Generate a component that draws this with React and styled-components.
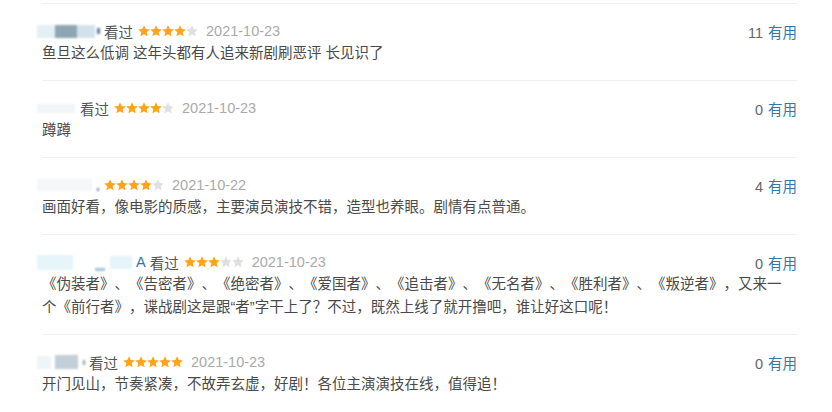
import { createGlobalStyle } from 'styled-components';
import styled from 'styled-components';

const GlobalStyle = createGlobalStyle`
  body {
    margin: 0;
    background: #fff;
    font-family: "Liberation Sans", "Noto Sans CJK SC", sans-serif;
    text-spacing-trim: space-all;
  }
`;

const List = styled.div`
  width: 755px;
  margin-left: 42px;
  padding-top: 3px;
`;

const Item = styled.div`
  border-top: 1px solid #f0f0f0;
  padding: 16px 0 15px;
`;

const Header = styled.div`
  display: flex;
  align-items: center;
  justify-content: space-between;
  height: 22px;
  font-size: 14.5px;
`;

const Info = styled.div`
  display: flex;
  align-items: center;
`;

const Mask = styled.div`
  display: flex;
  align-items: center;
  width: ${(p) => p.w}px;
  height: 18px;
  margin-left: -5px;
  filter: blur(1px);
`;

const Block = styled.span`
  display: block;
  flex: none;
  width: ${(p) => p.w}px;
  height: ${(p) => p.h || 13}px;
  margin-left: ${(p) => p.ml || 0}px;
  margin-top: ${(p) => p.mt || 0}px;
  background: ${(p) => p.c};
`;

const NameTail = styled.span`
  color: #3377aa;
  margin-left: 4px;
`;

const Seen = styled.span`
  color: #555;
  margin-left: 4px;
`;

const StarRow = styled.span`
  display: flex;
  margin-left: 5px;
`;

const Date = styled.span`
  color: #aaa;
  margin-left: 8px;
`;

const Votes = styled.div`
  color: #666;
`;

const Useful = styled.span`
  color: #3377aa;
  margin-left: 5px;
`;

const Content = styled.div`
  font-size: 14.5px;
  line-height: 23px;
  color: #494949;
  padding-right: 12px;
`;

const Star = ({ on }) => (
  <svg width="12" height="12" viewBox="0 0 24 24">
    <polygon
      points="12,0.6 15.4,8 23.6,8.8 17.4,14.3 19.2,22.6 12,18.4 4.8,22.6 6.6,14.3 0.4,8.8 8.6,8"
      fill={on ? '#ffa31a' : '#e0e0e0'}
    />
  </svg>
);

const Stars = ({ n }) => (
  <StarRow>
    {[0, 1, 2, 3, 4].map((i) => (
      <Star key={i} on={i < n} />
    ))}
  </StarRow>
);

const reviews = [
  {
    mask: 63,
    blocks: [
      { w: 18, c: '#e4eff5' },
      { w: 22, c: '#8ea5b2' },
      { w: 18, c: '#d3e2ea' },
      { w: 3, h: 6, c: '#5a7fa0', ml: 2 },
    ],
    seen: true,
    stars: 4,
    date: '2021-10-23',
    votes: 11,
    text: '鱼旦这么低调 这年头都有人追来新剧刷恶评 长见识了',
  },
  {
    mask: 39,
    blocks: [{ w: 38, h: 9, c: '#f1f5f8' }],
    seen: true,
    stars: 4,
    date: '2021-10-23',
    votes: 0,
    text: '蹲蹲',
  },
  {
    mask: 62,
    blocks: [
      { w: 55, h: 12, c: '#f5f7f9' },
      { w: 2, h: 3, c: '#6b7f90', ml: 5, mt: 8 },
    ],
    seen: false,
    stars: 4,
    date: '2021-10-22',
    votes: 4,
    text: '画面好看，像电影的质感，主要演员演技不错，造型也养眼。剧情有点普通。',
  },
  {
    mask: 95,
    blocks: [
      { w: 36, h: 15, c: '#e6f5fa' },
      { w: 10, h: 3, c: '#9fc2d8', ml: 22, mt: 14 },
      { w: 22, h: 13, c: '#e4f4f9', ml: 5 },
    ],
    tail: 'A',
    seen: true,
    stars: 3,
    date: '2021-10-23',
    votes: 0,
    text:
      '《伪装者》、《告密者》、《绝密者》、《爱国者》、《追击者》、《无名者》、《胜利者》、《叛逆者》，又来一个《前行者》，谍战剧这是跟“者”字干上了？不过，既然上线了就开撸吧，谁让好这口呢！',
  },
  {
    mask: 48,
    blocks: [
      { w: 14, c: '#eef4f7' },
      { w: 23, h: 14, c: '#c2ced8', ml: 4 },
      { w: 2, h: 5, c: '#8aa0b0', ml: 5 },
    ],
    seen: true,
    stars: 5,
    date: '2021-10-23',
    votes: 0,
    text: '开门见山，节奏紧凑，不故弄玄虚，好剧！各位主演演技在线，值得追！',
  },
];

function App() {
  return (
    <>
      <GlobalStyle />
      <List>
        {reviews.map((r, i) => (
          <Item key={i}>
            <Header>
              <Info>
                <Mask w={r.mask}>
                  {r.blocks.map((b, j) => (
                    <Block key={j} {...b} />
                  ))}
                </Mask>
                {r.tail && <NameTail>{r.tail}</NameTail>}
                {r.seen && <Seen>看过</Seen>}
                <Stars n={r.stars} />
                <Date>{r.date}</Date>
              </Info>
              <Votes>
                {r.votes}
                <Useful>有用</Useful>
              </Votes>
            </Header>
            <Content>{r.text}</Content>
          </Item>
        ))}
      </List>
    </>
  );
}

export default App;
